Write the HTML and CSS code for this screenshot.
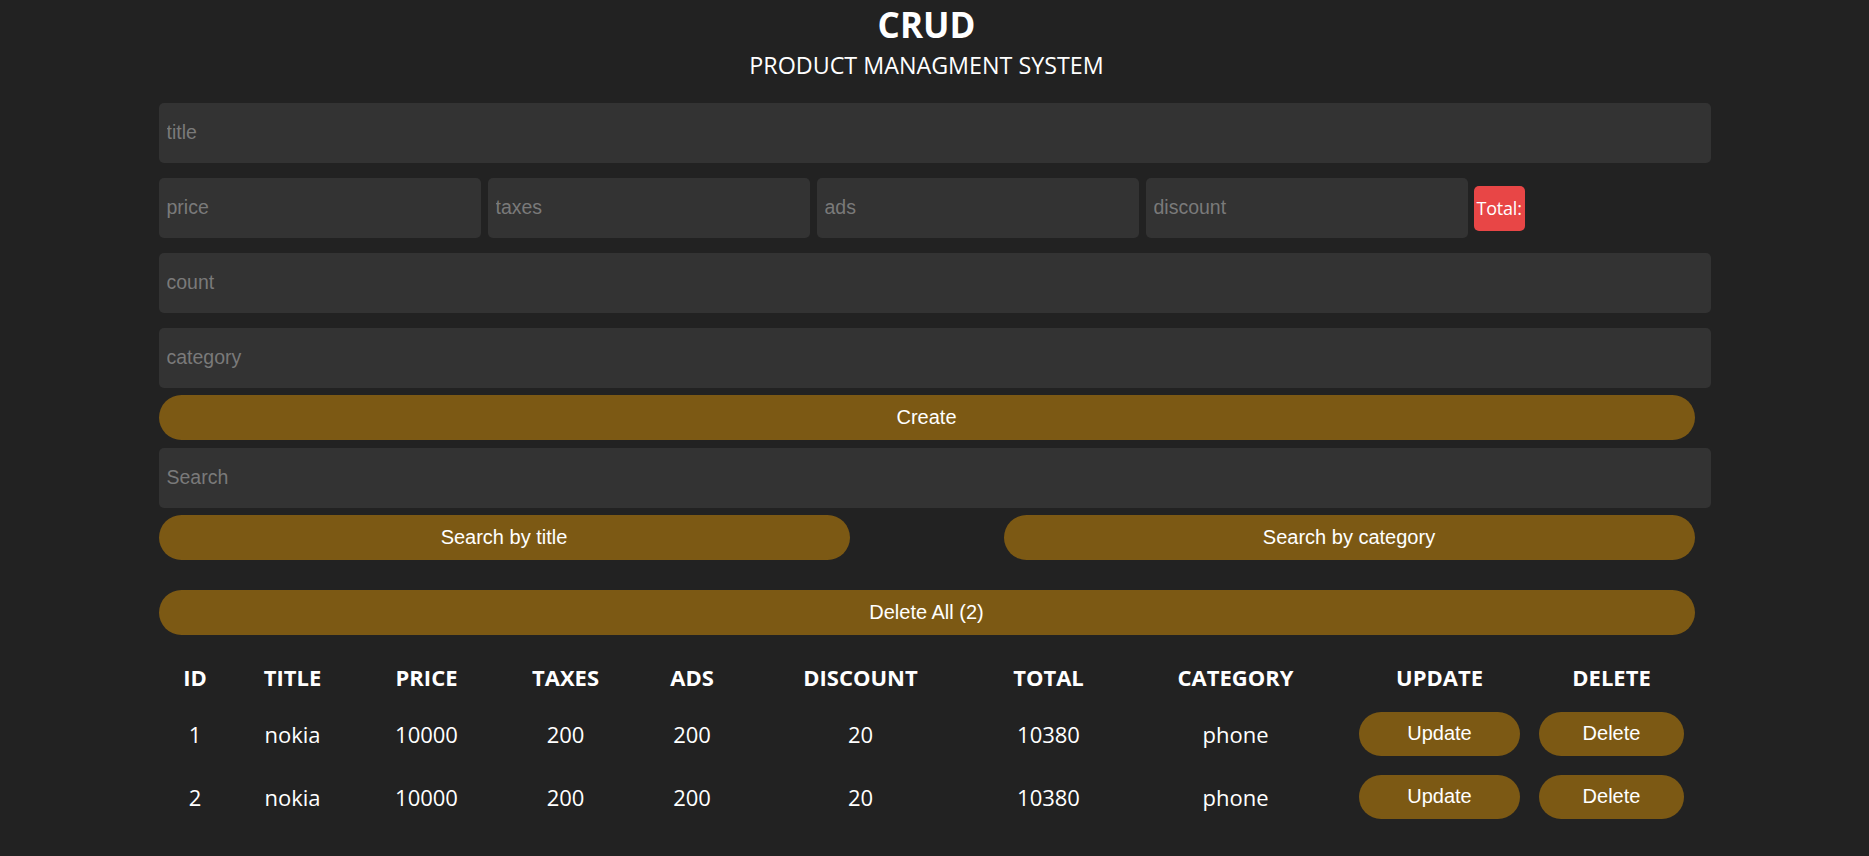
FILE: index.html
```html
<!DOCTYPE html>
<html lang="en">
<head>
<meta charset="UTF-8">
<title>CRUD</title>
<link rel="stylesheet" href="styles.css">
</head>
<body>
<div class="crud">
  <div class="head">
    <h2>CRUD</h2>
    <p>PRODUCT MANAGMENT SYSTEM</p>
  </div>
  <div class="inputs">
    <input type="text" class="field" placeholder="title">
    <div class="price">
      <input type="number" class="field" placeholder="price">
      <input type="number" class="field" placeholder="taxes">
      <input type="number" class="field" placeholder="ads">
      <input type="number" class="field" placeholder="discount">
      <small class="total">Total:</small>
    </div>
    <input type="number" class="field" placeholder="count">
    <input type="text" class="field" placeholder="category">
    <button class="btn btn-wide create">Create</button>
  </div>
  <div class="outputs">
    <input type="text" class="field search" placeholder="Search">
    <div class="search-btns">
      <button class="btn btn-half">Search by title</button>
      <button class="btn btn-half">Search by category</button>
    </div>
    <button class="btn btn-wide delete-all">Delete All (2)</button>
    <table class="table">
      <colgroup>
        <col class="c-id"><col class="c-title"><col class="c-price"><col class="c-taxes"><col class="c-ads">
        <col class="c-discount"><col class="c-total"><col class="c-category"><col class="c-update"><col class="c-delete">
      </colgroup>
      <thead>
        <tr>
          <th>ID</th><th>TITLE</th><th>PRICE</th><th>TAXES</th><th>ADS</th>
          <th>DISCOUNT</th><th>TOTAL</th><th>CATEGORY</th><th>UPDATE</th><th>DELETE</th>
        </tr>
      </thead>
      <tbody>
        <tr>
          <td>1</td><td>nokia</td><td>10000</td><td>200</td><td>200</td>
          <td>20</td><td>10380</td><td>phone</td>
          <td><button class="btn btn-update">Update</button></td>
          <td><button class="btn btn-delete">Delete</button></td>
        </tr>
        <tr>
          <td>2</td><td>nokia</td><td>10000</td><td>200</td><td>200</td>
          <td>20</td><td>10380</td><td>phone</td>
          <td><button class="btn btn-update">Update</button></td>
          <td><button class="btn btn-delete">Delete</button></td>
        </tr>
      </tbody>
    </table>
  </div>
</div>
</body>
</html>
```
FILE: styles.css
```css
* {
  box-sizing: border-box;
}
html, body {
  margin: 0;
  padding: 0;
  background: #222222;
  color: #ffffff;
  font-family: "Open Sans", "Noto Sans", sans-serif;
}
.crud {
  width: 1552px;
  margin: 0 auto;
}
.head {
  width: 1536px;
  text-align: center;
  padding-top: 2px;
}
.head h2 {
  margin: 0;
  font-size: 35px;
  font-weight: 700;
  line-height: 46px;
}
.head p {
  margin: 2px 0 0;
  font-size: 23.3px;
  line-height: 30px;
}
.inputs {
  margin-top: 23px;
  display: flex;
  flex-direction: column;
}
.field {
  display: block;
  width: 100%;
  height: 60px;
  border: none;
  outline: none;
  background: #333333;
  border-radius: 5px;
  padding: 0 8px 1px;
  color: #fff;
  font-family: "Liberation Sans", Arial, sans-serif;
  font-size: 19.5px;
  margin-bottom: 15px;
}
.field::placeholder {
  color: #7a7a7a;
}
.price {
  display: flex;
  align-items: center;
  gap: 7px;
  margin-bottom: 15px;
}
.price .field {
  width: 322px;
  margin: 0;
}
.total {
  background: #e84646;
  color: #fff;
  font-size: 18px;
  height: 45px;
  display: flex;
  align-items: center;
  padding: 0 3px;
  border-radius: 5px;
  margin-left: -1px;
  letter-spacing: -0.2px;
}
.btn {
  border: none;
  outline: none;
  background: #7c5914;
  color: #fff;
  font-family: "Liberation Sans", Arial, sans-serif;
  font-size: 20px;
  height: 45px;
  border-radius: 23px;
  cursor: pointer;
  padding: 0 0 1px;
}
.btn-wide {
  width: 1536px;
  display: block;
}
.create {
  margin-top: -8px;
}
.outputs {
  margin-top: 8px;
}
.search {
  margin-bottom: 7px;
}
.search-btns {
  width: 1536px;
  display: flex;
  justify-content: space-between;
}
.btn-half {
  width: 691px;
}
.delete-all {
  margin-top: 30px;
}
.table {
  margin-top: 17px;
  border-collapse: collapse;
  table-layout: fixed;
  width: 1528px;
}
.table th {
  height: 50px;
  font-size: 22px;
  font-weight: 700;
  padding: 0;
  text-align: center;
}
.table td {
  height: 63px;
  font-size: 22px;
  padding: 0;
  text-align: center;
}
.c-id { width: 73px; }
.c-title { width: 122px; }
.c-price { width: 146px; }
.c-taxes { width: 132px; }
.c-ads { width: 121px; }
.c-discount { width: 216px; }
.c-total { width: 160px; }
.c-category { width: 214px; }
.c-update { width: 194px; }
.c-delete { width: 150px; }
.btn-update {
  width: 161px;
  height: 44px;
  border-radius: 22px;
  display: block;
  margin: 0 auto;
}
.btn-delete {
  width: 145px;
  height: 44px;
  border-radius: 22px;
  display: block;
  margin: 0 auto;
}
```
